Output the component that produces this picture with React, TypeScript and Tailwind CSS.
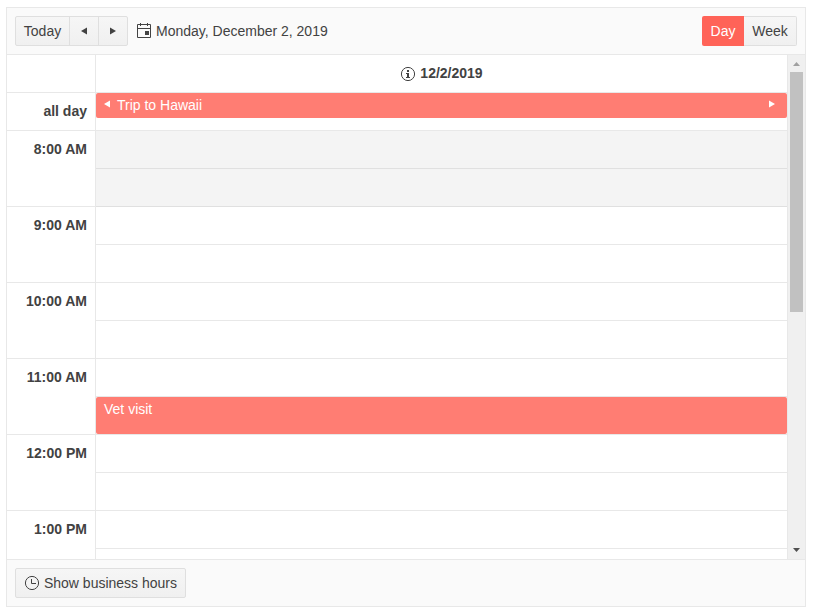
import React from "react";

const hours = ["8:00 AM", "9:00 AM", "10:00 AM", "11:00 AM", "12:00 PM", "1:00 PM"];

const line = "border-[#e8e8e8]";
const button =
  "flex h-[30px] items-center justify-center border border-[#dfdfdf] bg-linear-to-b from-[#f6f6f6] to-[#f0f0f0]";

function Triangle({ dir, className = "" }: { dir: "left" | "right"; className?: string }) {
  return (
    <svg width="6" height="8" viewBox="0 0 6 8" className={className} fill="currentColor">
      <path d={dir === "left" ? "M6 0.5V7.5L0 4Z" : "M0 0.5V7.5L6 4Z"} />
    </svg>
  );
}

function CalendarIcon() {
  return (
    <svg width="16" height="16" viewBox="0 0 16 16" fill="none" stroke="currentColor" className="mb-0.5">
      <path d="M1.5 2.5H14.5V15.5H1.5ZM1 6.5H15M4.5 1V4M11.5 1V4M3 2.5H6M10 2.5H13" />
      <path d="M9 9H13V13H9Z" fill="currentColor" stroke="none" />
    </svg>
  );
}

function InfoIcon() {
  return (
    <svg width="16" height="16" viewBox="0 0 16 16" fill="none" stroke="currentColor">
      <circle cx="8" cy="8" r="6.6" />
      <path d="M7 4H9V6H7ZM6 7H9V11H10V12H6V11H7V8H6Z" fill="currentColor" stroke="none" />
    </svg>
  );
}

function ClockIcon() {
  return (
    <svg width="16" height="16" viewBox="0 0 16 16" fill="none" stroke="currentColor">
      <circle cx="8" cy="8" r="6.6" />
      <path d="M7.5 4V8.5H12" />
    </svg>
  );
}

function Toolbar() {
  return (
    <div className={`flex h-[47px] shrink-0 items-center border-b bg-[#fafafa] px-2 ${line}`}>
      <div className="flex">
        <button className={`${button} w-[55px] rounded-l-[2px]`}>Today</button>
        <button className={`${button} -ml-px w-[30px]`}>
          <Triangle dir="left" />
        </button>
        <button className={`${button} -ml-px w-[30px] rounded-r-[2px]`}>
          <Triangle dir="right" />
        </button>
      </div>
      <div className="ml-2 flex items-center gap-1">
        <CalendarIcon />
        <span>Monday, December 2, 2019</span>
      </div>
      <div className="ml-auto flex">
        <button className="h-[30px] w-[42px] rounded-l-[2px] bg-[#ff6358] text-white">Day</button>
        <button className={`${button} w-[53px] rounded-r-[2px] border-l-0`}>Week</button>
      </div>
    </div>
  );
}

function Scrollbar() {
  return (
    <div className="flex w-[17px] shrink-0 flex-col items-center bg-[#f0f0f0]">
      <div className="flex h-[17px] items-start pt-[7px]">
        <svg width="7" height="4" viewBox="0 0 7 4" fill="#a0a0a0">
          <path d="M3.5 0L7 4H0Z" />
        </svg>
      </div>
      <div className="h-[240px] w-[13px] bg-[#c1c1c1]" />
      <div className="mt-auto flex h-[17px] items-start pt-1.5">
        <svg width="7" height="4" viewBox="0 0 7 4" fill="#505050">
          <path d="M0 0H7L3.5 4Z" />
        </svg>
      </div>
    </div>
  );
}

export default function App() {
  return (
    <div className="pt-[7px] pl-1.5 font-['Liberation_Sans',Arial,sans-serif] text-[14px] leading-5 text-[#424242]">
      <div className={`flex h-[600px] w-[800px] flex-col border ${line}`}>
        <Toolbar />
        <div className="flex h-[504px] overflow-hidden">
          <div className={`w-[89px] shrink-0 border-r text-right font-bold ${line}`}>
            <div className={`h-[38px] border-b ${line}`} />
            <div className={`h-[38px] border-b pt-2 pr-2 ${line}`}>all day</div>
            {hours.map((hour) => (
              <div key={hour} className={`h-[76px] border-b pt-2 pr-2 ${line}`}>
                {hour}
              </div>
            ))}
          </div>
          <div className={`w-[692px] border-r ${line}`}>
            <div className={`flex h-[38px] items-center justify-center gap-1 border-b font-bold ${line}`}>
              <InfoIcon />
              <span className="pb-0.5">12/2/2019</span>
            </div>
            <div className={`h-[38px] border-b ${line}`}>
              <div className="flex h-[25px] items-center rounded-[2px] bg-[#ff7d73] px-2 text-white">
                <Triangle dir="left" className="mb-1" />
                <span className="ml-[7px] pb-0.5">Trip to Hawaii</span>
                <Triangle dir="right" className="mr-1 mb-1 ml-auto" />
              </div>
            </div>
            {hours.map((hour) => (
              <div key={hour} className={hour === "8:00 AM" ? "bg-[#f4f4f4]" : ""}>
                <div className={`h-[38px] border-b ${hour === "8:00 AM" ? "border-[#e0e0e0]" : line}`} />
                <div className={`h-[38px] border-b ${hour === "8:00 AM" ? "border-[#e0e0e0]" : line}`}>
                  {hour === "11:00 AM" && (
                    <div className="h-[37px] rounded-[2px] bg-[#ff7d73] px-2 pt-0.5 text-white">Vet visit</div>
                  )}
                </div>
              </div>
            ))}
          </div>
          <Scrollbar />
        </div>
        <div className={`flex h-[47px] shrink-0 items-center border-t bg-[#fafafa] px-2 ${line}`}>
          <button className={`${button} w-[171px] gap-1 rounded-[2px]`}>
            <ClockIcon />
            <span>Show business hours</span>
          </button>
        </div>
      </div>
    </div>
  );
}
